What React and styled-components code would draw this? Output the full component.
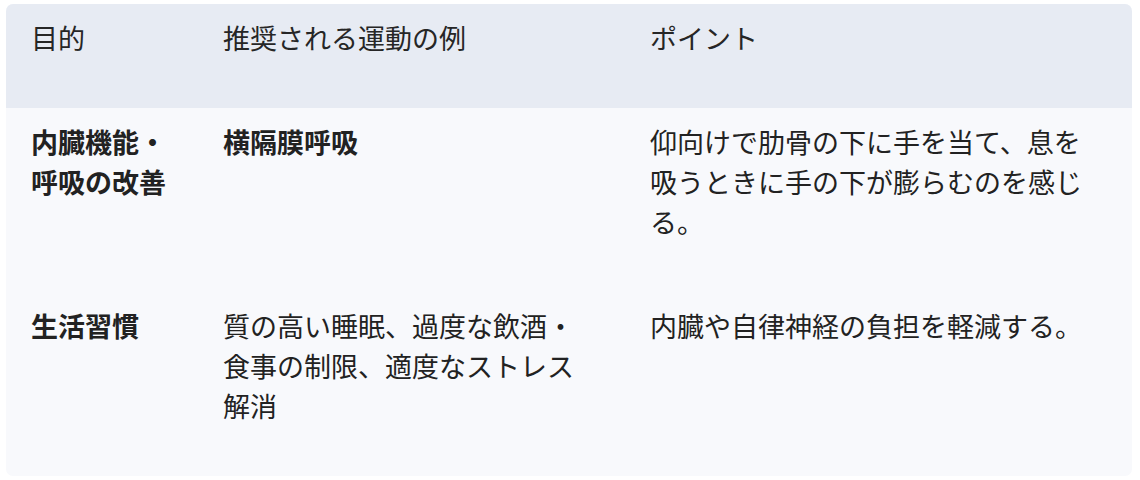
import React from "react";
import styled, { createGlobalStyle } from "styled-components";

const Global = createGlobalStyle`
  html, body { margin: 0; padding: 0; background: #ffffff; }
  body {
    font-family: "Noto Sans CJK JP", "Noto Sans", sans-serif;
    color: #1f1f1f;
  }
`;

const Page = styled.div`
  padding: 4px 8px 4px 6px;
`;

const Table = styled.table`
  width: 1126px;
  border-collapse: separate;
  border-spacing: 0;
  table-layout: fixed;
  border-radius: 7px;
  overflow: hidden;
  background: #f8f9fc;
  font-size: 27px;
  line-height: 40px;
`;

const HeadRow = styled.tr`
  background: #e7ebf3;
`;

const Th = styled.th`
  text-align: left;
  font-weight: 400;
  color: #262626;
  padding: 14px 27px 50px 25px;
  vertical-align: top;
`;

const Td = styled.td`
  padding: 14px 27px 50px 25px;
  vertical-align: top;
  color: #222222;
  font-weight: ${(p) => (p.$bold ? 700 : 400)};
`;

const rows = [
  {
    purpose: "内臓機能・呼吸の改善",
    example: "横隔膜呼吸",
    exampleBold: true,
    point: "仰向けで肋骨の下に手を当て、息を吸うときに手の下が膨らむのを感じる。",
  },
  {
    purpose: "生活習慣",
    example: "質の高い睡眠、過度な飲酒・食事の制限、適度なストレス解消",
    exampleBold: false,
    point: "内臓や自律神経の負担を軽減する。",
  },
];

export default function App() {
  return (
    <>
      <Global />
      <Page>
        <Table>
          <colgroup>
            <col style={{ width: "192px" }} />
            <col style={{ width: "427px" }} />
            <col style={{ width: "507px" }} />
          </colgroup>
          <thead>
            <HeadRow>
              <Th>目的</Th>
              <Th>推奨される運動の例</Th>
              <Th>ポイント</Th>
            </HeadRow>
          </thead>
          <tbody>
            {rows.map((r) => (
              <tr key={r.purpose}>
                <Td $bold>{r.purpose}</Td>
                <Td $bold={r.exampleBold}>{r.example}</Td>
                <Td>{r.point}</Td>
              </tr>
            ))}
          </tbody>
        </Table>
      </Page>
    </>
  );
}
